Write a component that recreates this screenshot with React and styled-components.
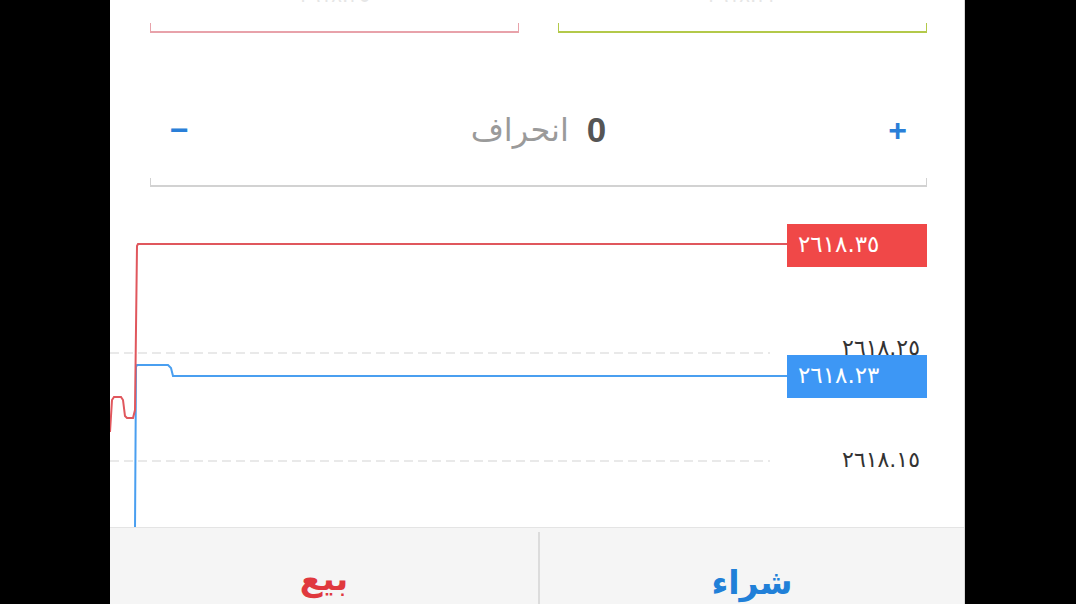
import styled, { createGlobalStyle } from "styled-components";

const Global = createGlobalStyle`
  html, body {
    margin: 0;
    padding: 0;
    background: #000;
    font-family: "DejaVu Sans", "Noto Sans", sans-serif;
  }
`;

const Page = styled.div`
  height: 604px;
  overflow: hidden;
  background: #000;
  padding-left: 110px;
  display: flex;
`;

const Panel = styled.div`
  width: 854px;
  height: 604px;
  background: #fff;
  border-right: 1px solid #d8d8d8;
  display: flex;
  flex-direction: column;
`;

const TopRow = styled.div`
  height: 33px;
  overflow: hidden;
  display: grid;
  grid-template-columns: 1fr 1fr;
  grid-template-rows: 33px;
  column-gap: 39px;
  padding: 0 37px 0 40px;
`;

const Field = styled.div`
  height: 33px;
  min-height: 0;
  display: flex;
  flex-direction: column;
  justify-content: flex-end;
  align-items: center;
`;

const FieldValue = styled.div`
  font-size: 20px;
  line-height: 22px;
  color: #e6e6e6;
  margin-bottom: 17px;
  flex-shrink: 0;
`;

const Bracket = styled.div`
  align-self: stretch;
  flex-shrink: 0;
  height: ${(p) => p.$h || 9}px;
  border: 2px solid ${(p) => p.$color};
  border-top: none;
  border-left-width: 1px;
  border-right-width: 1px;
  box-sizing: border-box;
`;

const DevRow = styled.div`
  height: 154px;
  margin: 0 37px 0 40px;
  display: flex;
  flex-direction: column;
  justify-content: flex-end;
`;

const Controls = styled.div`
  height: 72px;
  display: flex;
  align-items: center;
  justify-content: space-between;
  padding: 0 20px;
  margin-bottom: 12px;
`;

const Step = styled.span`
  color: #2a7fd8;
  font-family: "Liberation Sans", Arial, sans-serif;
  font-size: 32px;
  font-weight: bold;
  line-height: 32px;
`;

const Deviation = styled.div`
  display: flex;
  align-items: center;
  gap: 18px;
  direction: rtl;
  margin-left: 0;
`;

const DevValue = styled.span`
  font-family: "Liberation Sans", Arial, sans-serif;
  font-weight: bold;
  font-size: 35px;
  color: #555;
`;

const DevLabel = styled.span`
  font-size: 32px;
  color: #9a9a9a;
`;

const Chart = styled.div`
  position: relative;
  height: 340px;
  overflow: hidden;
`;

const Lines = styled.svg`
  position: absolute;
  inset: 0;
`;

const PriceTag = styled.div`
  position: absolute;
  left: 677px;
  top: ${(p) => p.$top}px;
  width: 140px;
  height: 43px;
  background: ${(p) => p.$bg};
  color: #fff;
  font-size: 23px;
  line-height: 40px;
  padding-left: 11px;
  box-sizing: border-box;
`;

const AxisLabel = styled.div`
  position: absolute;
  right: 44px;
  top: ${(p) => p.$top}px;
  font-size: 22px;
  color: #333;
`;

const Actions = styled.div`
  height: 77px;
  display: grid;
  grid-template-columns: 428px 1fr;
  background: #f5f5f5;
  border-top: 1px solid #e4e4e4;
  box-sizing: border-box;
`;

const Action = styled.div`
  display: flex;
  justify-content: center;
  padding-top: 31px;
  font-size: 33px;
  font-weight: bold;
  color: ${(p) => p.$color};
  border-left: ${(p) => (p.$divider ? "2px solid #dcdcdc" : "none")};
  margin-top: ${(p) => (p.$divider ? "4px" : "0")};
`;

const px = (x) => x - 110;
const py = (y) => y - 187;

const redPts = [
  [110, 432], [112, 400], [114, 397], [121, 397], [123, 400], [125, 416],
  [127, 418], [133, 418], [135, 410], [137, 246], [138, 244], [787, 244],
];
const bluePts = [
  [135, 530], [136, 367], [137, 365], [168, 365], [171, 368], [173, 376], [787, 376],
];
const toPath = (pts) => pts.map(([x, y], i) => `${i ? "L" : "M"}${px(x)},${py(y)}`).join(" ");

export default function App() {
  return (
    <>
      <Global />
      <Page>
        <Panel>
          <TopRow>
            <Field>
              <FieldValue>٢٦١٨.٣٥</FieldValue>
              <Bracket $color="#e8a2aa" $h={10} />
            </Field>
            <Field>
              <FieldValue>٢٦١٨.٢٣</FieldValue>
              <Bracket $color="#b3c94a" $h={10} />
            </Field>
          </TopRow>

          <DevRow>
            <Controls>
              <Step>−</Step>
              <Deviation>
                <DevValue>0</DevValue>
                <DevLabel>انحراف</DevLabel>
              </Deviation>
              <Step>+</Step>
            </Controls>
            <Bracket $color="#d2d2d2" $h={9} />
          </DevRow>

          <Chart>
            <Lines width="854" height="340">
              <line x1="0" y1={py(353)} x2={px(770)} y2={py(353)} stroke="#e2e2e2" strokeWidth="1.5" strokeDasharray="9 5" />
              <line x1="0" y1={py(461)} x2={px(770)} y2={py(461)} stroke="#e2e2e2" strokeWidth="1.5" strokeDasharray="9 5" />
              <path d={toPath(bluePts)} fill="none" stroke="#4a9ff0" strokeWidth="2" />
              <path d={toPath(redPts)} fill="none" stroke="#e0575d" strokeWidth="2" />
            </Lines>
            <AxisLabel $top={148}>٢٦١٨.٢٥</AxisLabel>
            <AxisLabel $top={260}>٢٦١٨.١٥</AxisLabel>
            <PriceTag $top={37} $bg="#f04848">٢٦١٨.٣٥</PriceTag>
            <PriceTag $top={168} $bg="#3d97f5">٢٦١٨.٢٣</PriceTag>
          </Chart>

          <Actions>
            <Action $color="#e0393e">بيع</Action>
            <Action $color="#2180d8" $divider>شراء</Action>
          </Actions>
        </Panel>
      </Page>
    </>
  );
}
